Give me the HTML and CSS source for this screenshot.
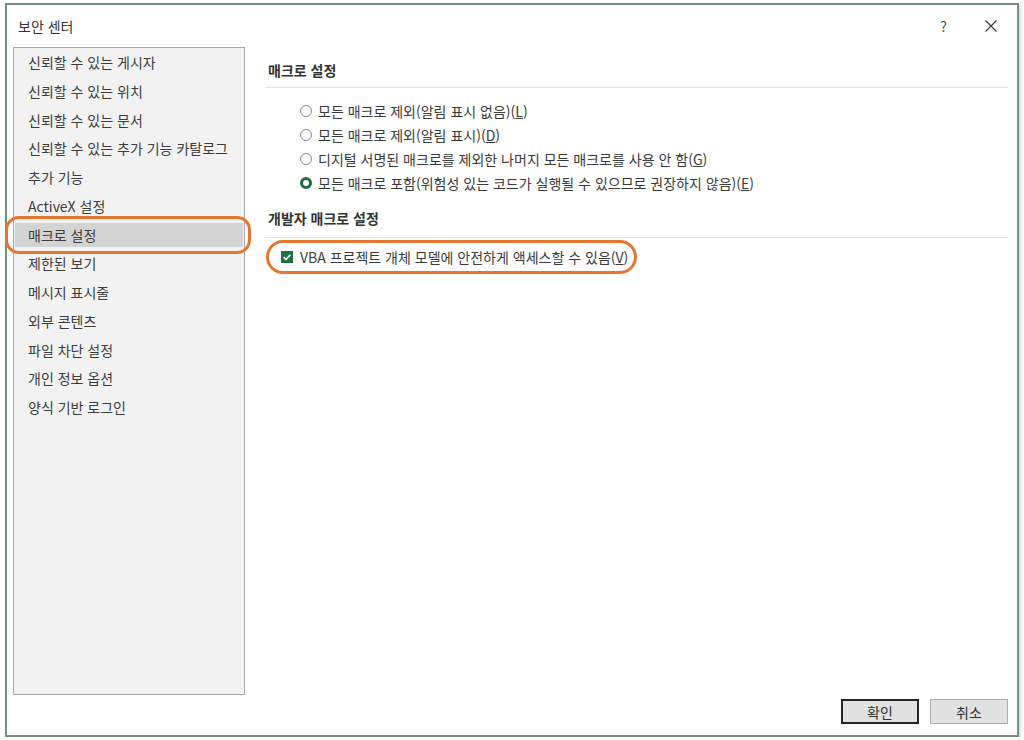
FILE: index.html
```html
<!DOCTYPE html>
<html lang="ko">
<head>
    <meta charset="UTF-8">
    <title>보안 센터</title>
    <link rel="stylesheet" href="styles.css">
</head>
<body>
    <div class="dialog">
        <div class="title-bar">
            <span class="title">보안 센터</span>
            <div class="title-buttons">
                <span class="help">?</span>
                <svg class="close" width="12" height="12" viewBox="0 0 12 12">
                    <path d="M0.5 0.5 L11.5 11.5 M11.5 0.5 L0.5 11.5" stroke="#333" stroke-width="1.1" fill="none"/>
                </svg>
            </div>
        </div>

        <div class="dialog-body">
            <ul class="nav-list">
                <li>신뢰할 수 있는 게시자</li>
                <li>신뢰할 수 있는 위치</li>
                <li>신뢰할 수 있는 문서</li>
                <li>신뢰할 수 있는 추가 기능 카탈로그</li>
                <li>추가 기능</li>
                <li>ActiveX 설정</li>
                <li class="active marked">매크로 설정</li>
                <li>제한된 보기</li>
                <li>메시지 표시줄</li>
                <li>외부 콘텐츠</li>
                <li>파일 차단 설정</li>
                <li>개인 정보 옵션</li>
                <li>양식 기반 로그인</li>
            </ul>

            <div class="settings">
                <div class="section-title">매크로 설정</div>
                <div class="option-list">
                    <label class="option"><span class="radio"></span><span>모든 매크로 제외(알림 표시 없음)(<u>L</u>)</span></label>
                    <label class="option"><span class="radio"></span><span>모든 매크로 제외(알림 표시)(<u>D</u>)</span></label>
                    <label class="option"><span class="radio"></span><span>디지털 서명된 매크로를 제외한 나머지 모든 매크로를 사용 안 함(<u>G</u>)</span></label>
                    <label class="option"><span class="radio checked"></span><span>모든 매크로 포함(위험성 있는 코드가 실행될 수 있으므로 권장하지 않음)(<u>E</u>)</span></label>
                </div>

                <div class="section-title second">개발자 매크로 설정</div>
                <label class="check-row marked">
                    <svg class="checkbox" width="12" height="12" viewBox="0 0 12 12">
                        <rect width="12" height="12" fill="#1e7145"/>
                        <path d="M2.6 6.2 L5 8.4 L9.4 3.8" stroke="#fff" stroke-width="1.6" fill="none"/>
                    </svg>
                    <span>VBA 프로젝트 개체 모델에 안전하게 액세스할 수 있음(<u>V</u>)</span>
                </label>
            </div>
        </div>

        <div class="dialog-footer">
            <button class="btn default">확인</button>
            <button class="btn">취소</button>
        </div>
    </div>
</body>
</html>
```

FILE: styles.css
```css
* {
    margin: 0;
    padding: 0;
    box-sizing: border-box;
}

body {
    font-family: "Noto Sans CJK KR", "Noto Sans", sans-serif;
    font-size: 14px;
    color: #3a3a3a;
    background: #ffffff;
}

.dialog {
    margin: 3px 0 0 5px;
    width: 1014px;
    height: 734px;
    border: 2px solid #748f80;
    background: #ffffff;
    box-shadow: 2px 2px 3px rgba(0, 0, 0, 0.15);
    display: flex;
    flex-direction: column;
}

/* title bar */
.title-bar {
    height: 42px;
    display: flex;
    align-items: center;
    justify-content: space-between;
    padding: 0 20px 0 11px;
}

.title {
    color: #333333;
}

.title-buttons {
    display: flex;
    align-items: center;
    gap: 38px;
}

.help {
    font-size: 14px;
    color: #444444;
}

/* body: navigation + settings */
.dialog-body {
    height: 648px;
    display: flex;
    padding: 0 9px 0 6px;
}

.nav-list {
    list-style: none;
    width: 232px;
    background: #f2f2f2;
    border: 1px solid #a8a8a8;
    padding-top: 2px;
    display: flex;
    flex-direction: column;
    gap: 4.75px;
}

.nav-list li {
    height: 24px;
    line-height: 24px;
    padding-left: 14px;
    color: #3c3c3c;
}

.nav-list li.active {
    background: #d4d4d4;
    margin: 0 1px;
    padding-left: 13px;
}

.marked {
    position: relative;
}

.marked::after {
    content: "";
    position: absolute;
    border: 3px solid #e5762f;
    border-radius: 14px;
    pointer-events: none;
}

.nav-list li.marked::after {
    left: -10px;
    right: -8px;
    top: -7px;
    bottom: -7px;
}

.settings {
    flex: 1;
    margin-left: 20px;
}

.section-title {
    font-weight: bold;
    line-height: 18px;
    padding: 14px 0 8px 3px;
    border-bottom: 1px solid #e3e3e3;
    color: #333333;
}

.section-title.second {
    padding-top: 14px;
    padding-bottom: 10px;
}

.option-list {
    padding: 11px 0 0 35px;
}

.option {
    display: flex;
    align-items: center;
    height: 24px;
    gap: 6px;
}

.radio {
    width: 12px;
    height: 12px;
    border: 1px solid #8c8c8c;
    border-radius: 50%;
    background: #ffffff;
}

.radio.checked {
    border: 3px solid #1e6b40;
}

.check-row {
    display: inline-flex;
    align-items: center;
    gap: 7px;
    height: 24px;
    margin: 7px 0 0 16px;
}

.check-row.marked::after {
    left: -15px;
    right: -9px;
    top: -5px;
    bottom: -5px;
    border-radius: 17px;
}

/* footer buttons */
.dialog-footer {
    display: flex;
    justify-content: flex-end;
    gap: 11px;
    padding: 4px 9px 0 0;
}

.btn {
    width: 78px;
    height: 25px;
    font-family: inherit;
    font-size: 14px;
    color: #333333;
    background: #e1e1e1;
    border: 1px solid #adadad;
}

.btn.default {
    border: 2px solid #262626;
}
```
